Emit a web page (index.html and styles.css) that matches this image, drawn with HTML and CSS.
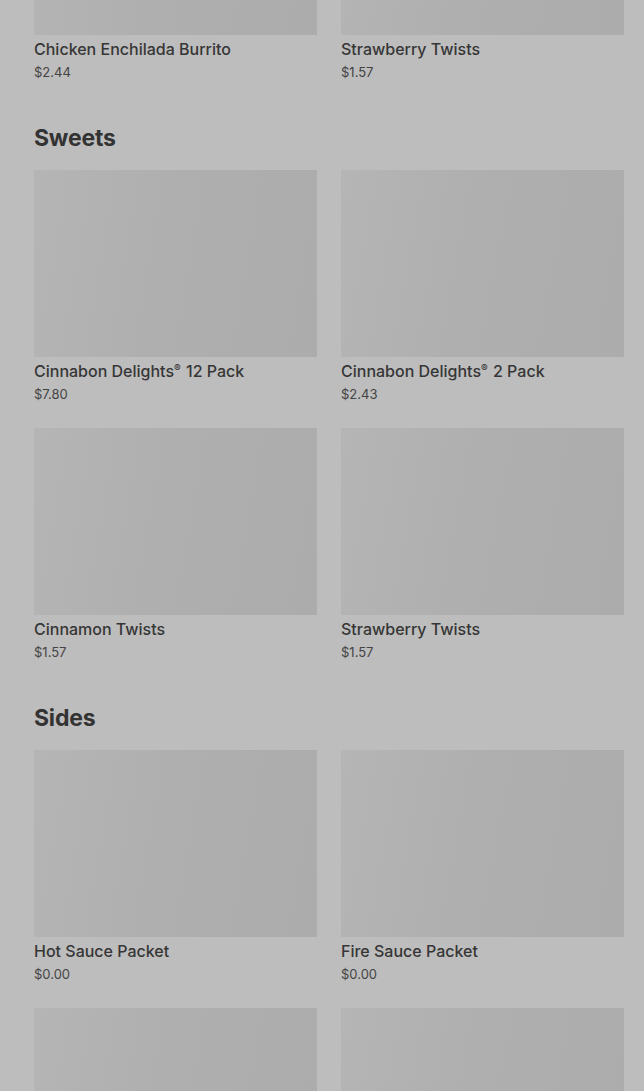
FILE: index.html
```html
<!DOCTYPE html>
<html lang="en">
<head>
<meta charset="utf-8">
<title>Menu</title>
<link rel="stylesheet" href="styles.css">
</head>
<body>
<main class="menu">
  <section class="section section-top">
    <div class="grid">
      <div class="card">
        <div class="thumb"></div>
        <div class="name">Chicken Enchilada Burrito</div>
        <div class="price">$2.44</div>
      </div>
      <div class="card">
        <div class="thumb"></div>
        <div class="name">Strawberry Twists</div>
        <div class="price">$1.57</div>
      </div>
    </div>
  </section>

  <section class="section">
    <h2 class="heading">Sweets</h2>
    <div class="grid">
      <div class="card">
        <div class="thumb"></div>
        <div class="name">Cinnabon Delights<sup class="reg">®</sup> 12 Pack</div>
        <div class="price">$7.80</div>
      </div>
      <div class="card">
        <div class="thumb"></div>
        <div class="name">Cinnabon Delights<sup class="reg">®</sup> 2 Pack</div>
        <div class="price">$2.43</div>
      </div>
      <div class="card">
        <div class="thumb"></div>
        <div class="name">Cinnamon Twists</div>
        <div class="price">$1.57</div>
      </div>
      <div class="card">
        <div class="thumb"></div>
        <div class="name">Strawberry Twists</div>
        <div class="price">$1.57</div>
      </div>
    </div>
  </section>

  <section class="section">
    <h2 class="heading">Sides</h2>
    <div class="grid">
      <div class="card">
        <div class="thumb"></div>
        <div class="name">Hot Sauce Packet</div>
        <div class="price">$0.00</div>
      </div>
      <div class="card">
        <div class="thumb"></div>
        <div class="name">Fire Sauce Packet</div>
        <div class="price">$0.00</div>
      </div>
      <div class="card">
        <div class="thumb"></div>
        <div class="name">Mild Sauce Packet</div>
        <div class="price">$0.00</div>
      </div>
      <div class="card">
        <div class="thumb"></div>
        <div class="name">Diablo Sauce Packet</div>
        <div class="price">$0.00</div>
      </div>
    </div>
  </section>
</main>
</body>
</html>
```

FILE: styles.css
```css
html, body {
  margin: 0;
  padding: 0;
  background: #bdbdbd;
  height: 1091px;
  overflow: hidden;
}

body {
  font-family: "Inter", "Roboto", "Liberation Sans", sans-serif;
  color: #333333;
}

.menu {
  padding: 0 20px 0 34px;
  margin-top: -152px;
}

.section + .section {
  margin-top: 40px;
}

.heading {
  margin: 0 0 16px 0;
  font-size: 23px;
  line-height: 32px;
  font-weight: 700;
  color: #333333;
  letter-spacing: -0.2px;
}

.grid {
  display: grid;
  grid-template-columns: 283px 283px;
  column-gap: 24px;
  row-gap: 24px;
}

.card {
  display: flex;
  flex-direction: column;
}

.thumb {
  height: 187px;
  background: linear-gradient(100deg, #b5b5b5 0%, #afafaf 45%, #acacac 100%);
}

.name {
  margin-top: 4px;
  font-size: 16px;
  line-height: 20px;
  font-weight: 500;
  color: #363636;
}

.reg {
  font-size: 10px;
  line-height: 0;
  vertical-align: 5px;
  margin-right: 1px;
}

.price {
  margin-top: 3px;
  font-size: 13px;
  line-height: 20px;
  font-weight: 400;
  color: #444444;
}
```
